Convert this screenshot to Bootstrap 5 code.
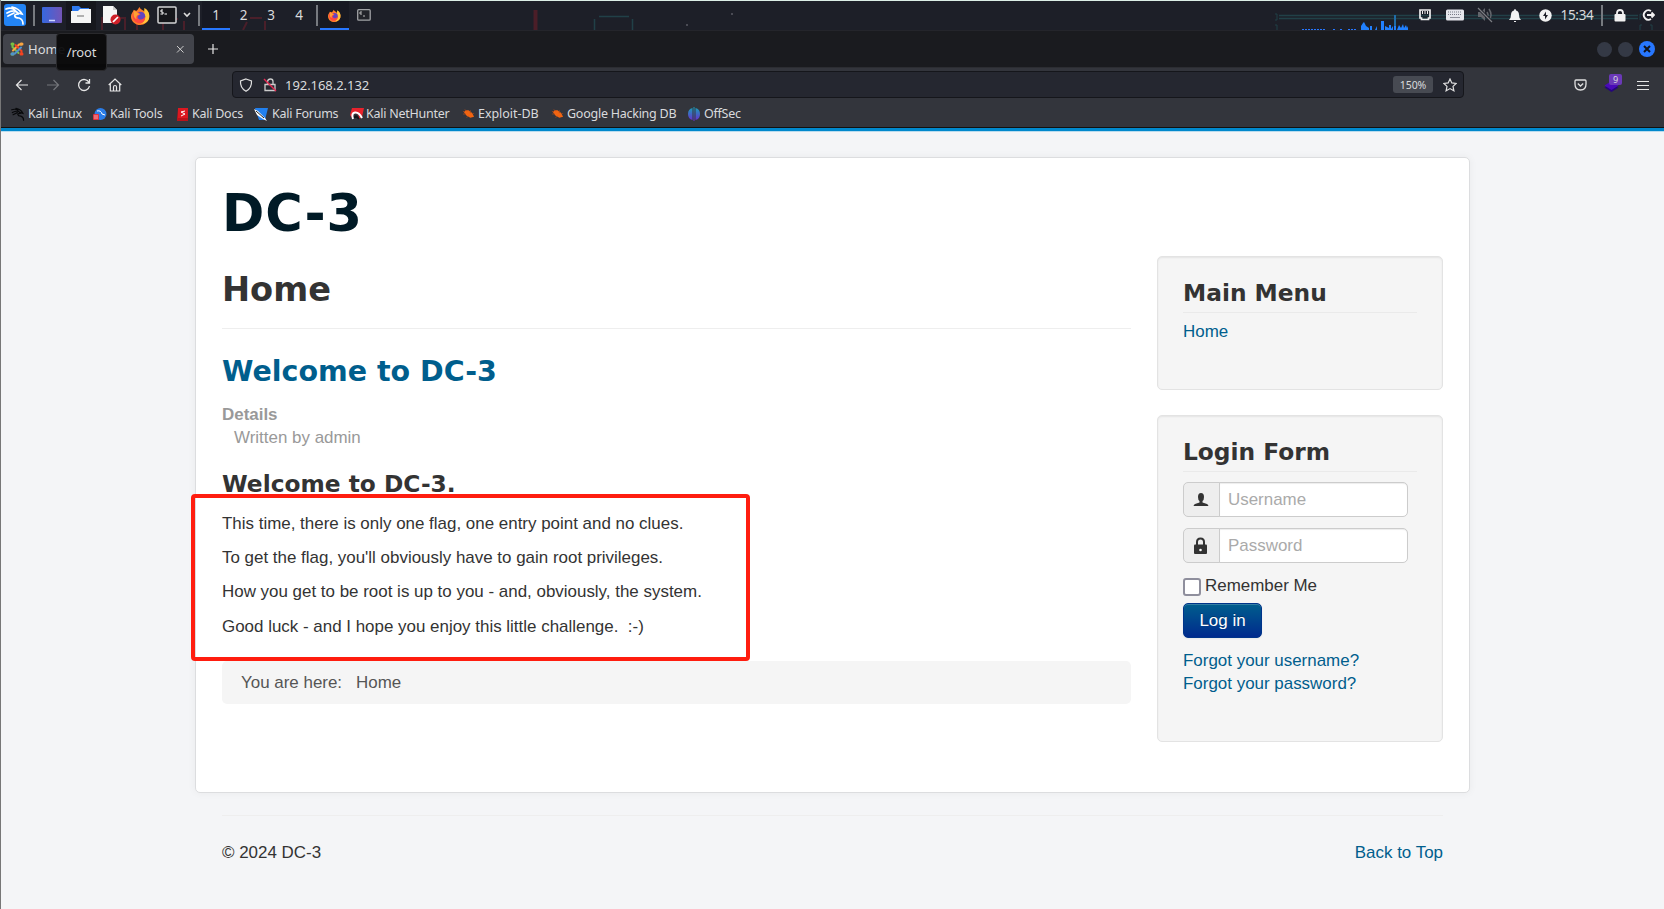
<!DOCTYPE html>
<html lang="en">
<head>
<meta charset="utf-8">
<title>Home</title>
<link href="https://cdn.jsdelivr.net/npm/bootstrap@5.3.0/dist/css/bootstrap.min.css" rel="stylesheet">
<style>
body{background:#f4f5f7;font-family:"Liberation Sans",Arial,sans-serif;font-size:16.96px;line-height:23px;color:#333;height:909px;overflow:hidden;border-left:1px solid #777}
a{color:#005e8d;text-decoration:none}
svg{display:block;flex:none}
.desktop{margin-left:-1px;font-family:"Noto Sans",sans-serif;color:#d9dadc;line-height:18px}
.taskbar{height:31px;background:#1d1f28;border-top:1px solid #dceee6;border-bottom:1px solid #24252b}
.wall{position:absolute;left:0;top:0}
.tgrid{display:grid;height:29px;position:relative;align-items:stretch}
.tgrid>*{display:flex;align-items:center;justify-content:center;font-size:13.5px;letter-spacing:-.3px;padding-bottom:1px}
.tleft{grid-template-columns:30px 8px 28px 30px 30px 28px 25px 16px 7px 28px 27px 28px 28px 7px 29px 30px}
.tright{grid-template-columns:30px 30px 30px 30px 27px 36px 18px 18px 35px}
.sep{width:2px;height:21px;background:#777a80}
.tgrid>.on{background:#171922;border-bottom:2px solid #2777ff;padding:1px 0 0}
.tabs{height:36px;background:#1a1b1f;padding-left:3px}
.tab{width:191px;height:30px;background:#42444b;border-radius:4px;padding:0 9px 0 7px;font-size:13px}
.tip{position:absolute;left:56px;top:33px;width:51px;height:38px;background:rgba(9,9,10,.94);border:1px solid #29292c;border-radius:4px;font-size:13px;letter-spacing:-.2px}
.wbtn{width:15px;height:15px;border-radius:50%;background:#343945}
.toolbar{height:61px;background:#33353c;border-top:1px solid #2c2d32;border-bottom:1px solid #111}
.navgrid{display:grid;grid-template-columns:6px 31px 31px 31px 31px 102px 1232px 101px 31px 31px 32px;height:33px;align-items:center;justify-items:center}
.urlbar{width:100%;height:27px;background:#252730;border:1px solid #15161b;border-radius:4px;font-size:13px;letter-spacing:-.05px;padding:0 6px}
.zoomed{width:40px;height:17px;background:#474a52;border-radius:3px;font-size:10.5px}
.marks{display:grid;grid-template-columns:82px 84px 77px 96px 112px 89px 136px 80px;padding-left:11px;height:26px;align-items:center;font-size:12.5px}
.marks>div{display:flex;align-items:center;white-space:nowrap;letter-spacing:-.25px}
.extbadge{position:absolute;left:5px;top:-3px;width:13px;height:11px;background:#6b39b8;border-radius:2px;font-size:9px;line-height:11px;text-align:center}
.strip{height:4px;background:#08c;border-bottom:1px solid #b9dcee}
.sheet{width:1275px;height:636px;margin:25px 0 0 194px;background:#fff;border:1px solid #dcdddf;border-radius:5px;padding:26px 25px 0 26px;box-shadow:0 0 8px rgba(0,0,0,.05)}
h1,h2,h3,h4{font-family:"DejaVu Sans",sans-serif;font-weight:700;margin:0;color:#333;white-space:nowrap}
h1{font-size:51px;line-height:60px;letter-spacing:.8px;color:#001a26}
.main{width:909px;position:relative}
.main h2{font-size:33.6px;line-height:50px;padding:9px 0 13px;border-bottom:1px solid #eee}
.main h3{font-size:28.5px;line-height:36px;margin-top:25px;color:#005e8d}
.main h4,.box h4{font-size:23.3px;line-height:30px}
.info{margin-top:13px;color:#999}
.main h4{margin:20px 0 13px}
.main p{margin:0 0 11.2px}
.crumbs{height:43px;background:#f5f5f5;border-radius:5px;margin-top:23px;padding-left:19px;color:#555}
.frame{position:absolute;left:-31px;top:238px;width:559px;height:167px;border:4px solid #ff1d0f;border-radius:4px}
.box{width:286px;background:#f5f5f5;border:1px solid #e3e3e3;border-radius:5px;box-shadow:inset 0 1px 2px rgba(0,0,0,.07);padding:21px 25px 0}
.box h4{padding-bottom:4px;border-bottom:1px solid #eaeaea;margin-bottom:7px}
.side{margin-right:1px}
.menu{height:134px;margin-bottom:25px}
.login{height:327px}
.login .input-group{width:225px;height:35px;margin-bottom:11px}
.login .input-group-text{width:37px;background:#eee;border-color:#ccc;padding:0 0 0 9px;border-radius:5px}
.login .form-control{font-size:16.96px;line-height:23px;border-color:#ccc;padding:0 8px 1px;border-radius:5px;box-shadow:inset 0 1px 1px rgba(0,0,0,.075)}
.login .form-control::placeholder{color:#aaa}
.tick{width:18px;height:18px;border:2px solid #8f8f9d;border-radius:3px;background:#fff;margin-top:4px}
.btn-log{width:79px;height:35px;padding:0;color:#fff;font-size:16.96px;background:linear-gradient(#005e8d,#002a8d);border:1px solid #00348a;border-radius:5px;text-shadow:0 -1px 0 rgba(0,0,0,.25);box-shadow:inset 0 1px 0 rgba(255,255,255,.2),0 1px 2px rgba(0,0,0,.05)}
.foot{width:1221px;margin:22px 0 0 221px;border-top:1px solid #eee;padding-top:25px}
</style>
</head>
<body>
<svg width="0" height="0" class="position-absolute"><defs>
<symbol id="dragon" viewBox="0 0 20 20"><path d="M1 4C6 2 10 4 11 7M2 8C7 5 12 5 13 9C8 9 9 13 14 13C17 14 18 16 18 19M7 2C12 3 15 5 17 9L13 8M3 11L9 8" fill="none" stroke="currentColor" stroke-width="1.7" stroke-linecap="round"/></symbol>
<symbol id="fox" viewBox="0 0 20 20"><path d="M3 4C4 5 5 5 6 5C8 3 8 2 9 1C10 4 13 4 14 6L15 3C18 5 20 9 19 13C18 17 14 20 10 20C4 20 0 16 0 11C0 8 2 7 3 4Z" fill="#ff7b2a"/><path d="M14 2C18 4 20 8 19 13C18 17 14 19 10 19C15 17 16 12 14 8Z" fill="#ffc53a"/><circle cx="10" cy="11" r="5" fill="#6444c0"/><path d="M2 7C5 5 9 7 10 9C8 10 7 10 7 12C8 15 13 15 15 11C15 17 11 19 7 18C2 16 1 11 2 7Z" fill="#ff4940"/><path d="M3 5C5 6 7 6 9 9C6 9 5 12 6 14C3 13 2 9 3 5Z" fill="#ffa034"/></symbol>
<symbol id="bug" viewBox="0 0 14 12"><path d="M2 4L4 2L7 2L11 5L13 9L9 10L5 8Z" fill="#f26411"/><path d="M1 6L4 6M3 1L5 3M9 2L9 5M5 10L7 8M12 6L13 5M1 3L3 4" stroke="#a84a1c" stroke-width=".8"/></symbol>
</defs></svg>

<div class="desktop position-relative">
<div class="taskbar position-relative d-flex justify-content-between">
  <svg class="wall" width="1664" height="29" fill="none">
    <path d="M83 29V17H90M102 29V17H125V29M137 29V17M163 29V18H178M184 29V20M250 17H262M247 21L243 29M265 29V20" stroke="#4a1f2a" stroke-width="2"/>
    <path d="M535.500 29V9" stroke="#4b1e28" stroke-width="4"/><path d="M599 15.500H629M594.500 18V29M632.500 18V29M1279 14.500H1638M1279 17.500H1638" stroke="#214047" stroke-width="1.500"/>
    <path d="M1275 13H1277V19H1275M1275 24H1277V29M1642 13H1640V19M1642 24H1640V29M1650 24H1652V29" stroke="#214047"/>
    <path d="M731 13H733M686 24H688" stroke="#4a4b54" stroke-width="2"/>
    <path d="M1302 28.500H1325M1333 28.500H1336M1340 28.500H1342M1348 28.500H1357" stroke="#2777ff" stroke-dasharray="2 1"/>
    <path d="M1361 29V25L1363 22L1364 21L1366 25L1369 27V29ZM1370 29V25H1372V29ZM1375 29L1377 25V29ZM1381 29V20H1384V29ZM1385 29V25L1389 27V24H1391V28L1393 25V29ZM1394 29V23H1396V29ZM1397 29L1399 24L1401 27L1403 23L1404 27L1406 24L1407 27L1408 25V29Z" fill="#2180ff"/><path d="M1395 25V14" stroke="#206ca8" stroke-width="2"/>
  </svg>
  <div class="tgrid tleft">
    <div><svg width="22" height="22"><rect width="22" height="22" rx="3" fill="#2384f5"/><use href="#dragon" x="1" y="1" width="20" height="20" color="#fff"/></svg></div>
    <div><i class="sep"></i></div>
    <div><svg width="20" height="16"><defs><linearGradient id="dg"><stop stop-color="#3668df"/><stop offset="1" stop-color="#7355b7"/></linearGradient></defs><rect width="20" height="16" rx="1" fill="url(#dg)"/><path d="M7 13.500H13" stroke="#cfd8ff" stroke-width="1.500"/></svg></div>
    <div style="background:#16171d"><svg width="20" height="18"><path d="M1 0H8L10 2H18V6H1Z" fill="#2f7bf0"/><path d="M0 5H7L9 3H20V17H0Z" fill="#f5f5f5"/><path d="M6 10H13" stroke="#999" stroke-width="1.500"/></svg></div>
    <div><svg width="19" height="20"><path d="M1 1H11L15 5V18H1Z" fill="#f6f6f6"/><path d="M11 1V5H15" fill="#ccc"/><circle cx="13.500" cy="14.500" r="5" fill="#cf2029"/><path d="M11 17L16 12" stroke="#fff" stroke-width="1.700"/></svg></div>
    <div><svg width="19" height="19"><use href="#fox"/></svg></div>
    <div><svg width="20" height="18"><rect x="1" y="1" width="18" height="16" rx="1" fill="#15161a" stroke="#d2d3d5" stroke-width="1.500"/><path d="M6 4H4V6H6V8H3.500M7.500 8H10" fill="none" stroke="#fff"/></svg></div>
    <div><svg width="8" height="6"><path d="M1 1L4 4L7 1" fill="none" stroke="#ddd" stroke-width="1.600"/></svg></div>
    <div><i class="sep"></i></div>
    <div class="on">1</div><div>2</div><div>3</div><div>4</div>
    <div><i class="sep"></i></div>
    <div class="on"><svg width="13" height="13" viewBox="0 0 20 20"><use href="#fox"/></svg></div>
    <div><svg width="14" height="12"><rect x=".7" y=".7" width="12.500" height="10.500" rx="1" fill="#222429" stroke="#a0a2a5" stroke-width="1.300"/><path d="M5 3H3V5H5M6 7H8" fill="none" stroke="#bbb"/></svg></div>
  </div>
  <div class="tgrid tright">
    <div><svg width="12" height="12"><path d="M1 1H11V9H9.500V10.500H2.500V9H1Z" fill="none" stroke="#eee" stroke-width="1.700"/><path d="M3.500 2V5M6 2V5M8.500 2V5" stroke="#eee"/></svg></div>
    <div><svg width="18" height="12"><rect y=".5" width="18" height="11" rx="1.500" fill="#e5e6ec"/><path d="M2 3H16M2 5.500H16" stroke="#777a85" stroke-dasharray="1 1"/><path d="M4 8.500H14" stroke="#8b8e98"/></svg></div>
    <div><svg width="17" height="16"><path d="M1 5H4L8 1V14L4 10H1Z" fill="#62656b"/><path d="M10 5Q12 8 10 10M12 2Q16 8 12 13" fill="none" stroke="#62656b" stroke-width="1.500"/><path d="M1 1L15 15" stroke="#1d1f28" stroke-width="3"/><path d="M1 1L15 15" stroke="#7b7d82" stroke-width="1.300"/></svg></div>
    <div><svg width="12" height="13"><path d="M6 0Q7 0 7 1.500Q10 2 10 6Q10 9 12 11H0Q2 9 2 6Q2 2 5 1.500Q5 0 6 0ZM5 12H7V13H5Z" fill="#f2f2f2"/></svg></div>
    <div class="ps-1"><svg width="13" height="13"><circle cx="6.500" cy="6.500" r="6.200" fill="#f2f2f2"/><path d="M7 2.500L4 7H6L6 10.500L9 6H7Z" fill="#1d1f28"/></svg></div>
    <div class="ps-1">15:34</div>
    <div><i class="sep"></i></div>
    <div><svg width="12" height="13"><path d="M3 6V4Q3 1 6 1Q9 1 9 4V6" fill="none" stroke="#f2f2f2" stroke-width="1.800"/><rect x=".5" y="5" width="11" height="7.500" rx="1" fill="#f2f2f2"/></svg></div>
    <div class="ps-1"><svg width="13" height="12"><path d="M9 2A4.700 4.700 0 1 0 9 10M5 6H12M9.500 3.500L12 6L9.500 8.500" fill="none" stroke="#f2f2f2" stroke-width="1.900"/></svg></div>
  </div>
</div>

<div class="tabs d-flex align-items-center">
  <div class="tab d-flex align-items-center">
    <svg class="me-1" width="14" height="14" fill="none" stroke-width="2" stroke-linecap="round"><path d="M2.500 2.500V5L8.500 11" stroke="#7ac043"/><path d="M11.500 2.500H9L3 8.500" stroke="#f9a541"/><path d="M11.500 11.500V9L5.500 3" stroke="#f44321"/><path d="M2.500 11.500H5L11 5.500" stroke="#5091cd"/><path d="M2 2H3M2 12H3" stroke="#7ac043" stroke-width="3"/><path d="M11 2H12" stroke="#f9a541" stroke-width="3"/><path d="M11 12H12" stroke="#f44321" stroke-width="3"/><path d="M2 12H3" stroke="#5091cd" stroke-width="3"/></svg>
    <span class="me-auto">Home</span>
    <svg width="9" height="9"><path d="M1 1L7.500 7.500M7.500 1L1 7.500" stroke="#ccc"/></svg>
  </div>
  <svg class="me-auto" style="margin-left:13px" width="12" height="12"><path d="M6 1V11M1 6H11" stroke="#e6e6e6" stroke-width="1.200"/></svg>
  <div class="d-flex align-items-center" style="gap:6px;padding-right:9px">
    <i class="wbtn"></i><i class="wbtn"></i><svg width="16" height="16"><circle cx="8" cy="8" r="8" fill="#2777ff"/><path d="M5 5L11 11M11 5L5 11" stroke="#11131a" stroke-width="2"/></svg>
  </div>
</div>
<div class="tip d-flex align-items-center justify-content-center">/root</div>

<div class="toolbar">
  <div class="navgrid">
    <i></i>
    <svg width="14" height="12" fill="none" stroke="#e6e6e6" stroke-width="1.200"><path d="M13 6H1.500M6.500 1L1.500 6L6.500 11"/></svg>
    <svg width="14" height="12" fill="none" stroke="#74767b" stroke-width="1.200"><path d="M1 6H12.500M7.500 1L12.500 6L7.500 11"/></svg>
    <svg width="14" height="14" fill="none" stroke="#e6e6e6" stroke-width="1.300"><path d="M12 4.500A5.500 5.500 0 1 0 12.500 8M12.500 1V5H8.500"/></svg>
    <svg width="14" height="14" fill="none" stroke="#e6e6e6" stroke-width="1.200"><path d="M.7 7L7 1L13.300 7M2.300 6V13H11.700V6M5.500 13V9Q5.500 7.500 7 7.500Q8.500 7.500 8.500 9V13"/></svg>
    <i></i>
    <div class="urlbar d-flex align-items-center">
      <svg width="14" height="14" fill="none" stroke="#e0e0e0" stroke-width="1.200"><path d="M7 1L12.500 3Q13 10 7 13.300Q1 10 1.500 3Z"/></svg>
      <svg style="margin:0 8px 0 10px" width="14" height="14" fill="none"><path d="M4.500 6V3.500Q5 1 7.500 1Q10 1 10 3.500V6M2 6.500H12V12.500H2Z" stroke="#ccc" stroke-width="1.300"/><path d="M1 1L13 13" stroke="#e22850" stroke-width="1.400"/></svg>
      <span class="me-auto">192.168.2.132</span>
      <span class="zoomed d-flex align-items-center justify-content-center">150%</span>
      <svg style="margin:0 0 0 10px" width="14" height="14" fill="none" stroke="#e0e0e0" stroke-width="1.200"><path d="M7 1L8.800 4.900L13.200 5.400L10 8.400L10.900 12.800L7 10.600L3.100 12.800L4 8.400L.8 5.400L5.200 4.900Z"/></svg>
    </div>
    <i></i>
    <svg width="13" height="12" fill="none" stroke="#e0e0e0" stroke-width="1.300"><path d="M2 1H11Q12 1 12 2V5Q12 11 6.500 11Q1 11 1 5V2Q1 1 2 1ZM3.800 4.500L6.500 7L9.200 4.500"/></svg>
    <div class="position-relative"><svg width="15" height="16"><path d="M.5 10.500L7.500 6L14.500 10.500L7.500 15Z" fill="#26057c"/><path d="M.5 8.500L7.500 4L14.500 8.500L7.500 13Z" fill="#4a0ab9"/></svg><span class="extbadge">9</span></div>
    <svg width="12" height="10"><path d="M0 1.500H12M0 5.500H12M0 9.500H12" stroke="#e6e6e6"/></svg>
  </div>
  <div class="marks">
    <div><svg width="14" height="14" color="#08090b"><use href="#dragon"/></svg><span style="margin-left:3px">Kali Linux</span></div>
    <div><svg width="14" height="14"><circle cx="7.500" cy="7" r="6" fill="#2a7de8"/><path d="M4 4Q8 3 9 7L12 8" stroke="#fff" fill="none"/><rect y="7" width="6" height="6" rx="1" fill="#e3313e"/><path d="M1 9H5M1 11H5" stroke="#f3a7ad"/></svg><span style="margin-left:3px">Kali Tools</span></div>
    <div><svg width="11" height="13"><path d="M1 0H11V10H1Z" fill="#dc1820"/><path d="M0 1L1 10H11V13H0Z" fill="#b9131a"/><path d="M8 3L4 4L8 6L4 8" stroke="#fff" fill="none"/></svg><span style="margin-left:4px">Kali Docs</span></div>
    <div><svg width="15" height="14"><path d="M1 1H14L11 13H5Z" fill="#2180ef"/><path d="M0 2L4 4L11 11L13 14L9 12L3 8Z" fill="#fff"/><path d="M2 4L10 11" stroke="#222"/></svg><span style="margin-left:3px">Kali Forums</span></div>
    <div><svg width="14" height="14"><path d="M2 1H14L12 10L9 12Q9 6 5 6Q1 7 2 11L0 8Z" fill="#e8232d"/><path d="M3 12Q1 6 5 5.500Q9 5 12 11" stroke="#fff" stroke-width="2" fill="none"/><path d="M5 11Q5 7 9 12" stroke="#15161a" stroke-width="2" fill="none"/></svg><span style="margin-left:2px">Kali NetHunter</span></div>
    <div style="letter-spacing:-.05px"><svg width="13" height="12"><use href="#bug"/></svg><span style="margin-left:3px">Exploit-DB</span></div>
    <div><svg width="13" height="12"><use href="#bug"/></svg><span style="margin-left:3px">Google Hacking DB</span></div>
    <div><svg width="14" height="14"><defs><linearGradient id="og" x2="0" y2="1"><stop stop-color="#16a4b8"/><stop offset="1" stop-color="#6b2ad0"/></linearGradient></defs><path d="M5.500 1V13Q1 12 1 7Q1 2 5.500 1ZM8.500 1V13Q13 12 13 7Q13 2 8.500 1ZM6.500 0H7.500V14H6.500Z" fill="url(#og)"/></svg><span style="margin-left:3px">OffSec</span></div>
  </div>
</div>
<div class="strip"></div>
</div>

<div class="sheet">
  <h1>DC-3</h1>
  <div class="d-flex justify-content-between" style="margin-top:12px">
    <main class="main">
      <h2>Home</h2>
      <h3>Welcome to DC-3</h3>
      <div class="info"><b>Details</b><div style="padding-left:12px">Written by admin</div></div>
      <h4>Welcome to DC-3.</h4>
      <p>This time, there is only one flag, one entry point and no clues.</p>
      <p>To get the flag, you'll obviously have to gain root privileges.</p>
      <p>How you get to be root is up to you - and, obviously, the system.</p>
      <p>Good luck - and I hope you enjoy this little challenge.&nbsp; :-)</p>
      <div class="crumbs d-flex align-items-center"><span>You are here:</span><span style="margin-left:14px">Home</span></div>
      <div class="frame"></div>
    </main>
    <aside class="side">
      <div class="box menu"><h4>Main Menu</h4><a href="#">Home</a></div>
      <div class="box login"><h4>Login Form</h4>
        <div class="input-group" style="margin-top:10px"><span class="input-group-text"><svg width="16" height="16"><path d="M8 1Q11 1 11 5Q11 8 9.500 9V10.500L14 12Q15 12.500 15.500 14H.5Q1 12.500 2 12L6.500 10.500V9Q5 8 5 5Q5 1 8 1Z" fill="#333"/></svg></span><input class="form-control" placeholder="Username"></div>
        <div class="input-group"><span class="input-group-text"><svg width="15" height="18"><path d="M4 8V5Q4 1.500 7.500 1.500Q11 1.500 11 5V8" fill="none" stroke="#333" stroke-width="2"/><rect x="1" y="7.500" width="13" height="9.500" rx="1" fill="#333"/><circle cx="7.500" cy="13" r="1.300" fill="#fff"/></svg></span><input class="form-control" placeholder="Password"></div>
        <div class="d-flex" style="gap:4px;height:29px"><i class="tick"></i><span>Remember Me</span></div>
        <button class="btn btn-log d-block">Log in</button>
        <div class="d-flex flex-column" style="margin-top:11px"><a href="#">Forgot your username?</a><a href="#">Forgot your password?</a></div>
      </div>
    </aside>
  </div>
</div>
<footer class="foot d-flex justify-content-between"><span>© 2024 DC-3</span><a href="#">Back to Top</a></footer>
<script src="https://cdn.jsdelivr.net/npm/bootstrap@5.3.0/dist/js/bootstrap.bundle.min.js"></script>
</body>
</html>
